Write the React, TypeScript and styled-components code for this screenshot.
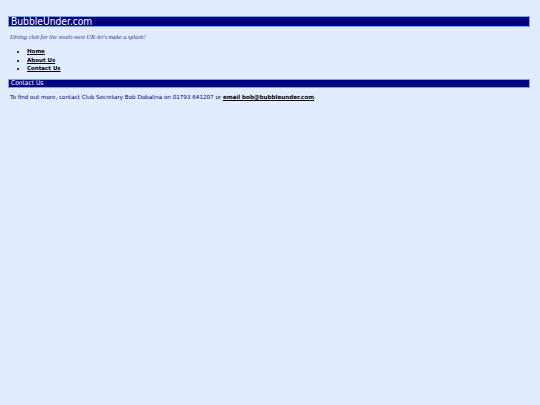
import styled, { createGlobalStyle } from "styled-components";

const GlobalStyle = createGlobalStyle`
  html, body {
    background: #e2ecff;
  }
  body {
    margin: 0;
    padding: 16px 10px 0 8px;
    font-family: "DejaVu Sans", Verdana, sans-serif;
    color: #000080;
  }
`;

const navItems = ["Home", "About Us", "Contact Us"];

export default function App() {
  return (
    <>
      <GlobalStyle />
      <Page>
        <Header>
          <SiteName>BubbleUnder.com</SiteName>
          <Tagline>Diving club for the south-west UK-let's make a splash!</Tagline>
        </Header>
        <Nav>
          <NavList>
            {navItems.map((item) => (
              <NavItem key={item}>
                <NavLink href="#">{item}</NavLink>
              </NavItem>
            ))}
          </NavList>
        </Nav>
        <Section>
          <SectionTitle>Contact Us</SectionTitle>
          <Text>
            To find out more, contact Club Secretary Bob Dobalina on 01793 641207 or{" "}
            <MailLink href="#">email bob@bubbleunder.com</MailLink>.
          </Text>
        </Section>
      </Page>
    </>
  );
}

const Page = styled.div`
  display: flex;
  flex-direction: column;
`;

const Header = styled.div`
  display: flex;
  flex-direction: column;
`;

const SiteName = styled.h1`
  margin: 0;
  padding: 0 2px;
  height: 9px;
  line-height: 9px;
  font-size: 10.2px;
  font-stretch: condensed;
  font-weight: normal;
  color: #ffffff;
  background: #000080;
  border: 1px solid #7da5d8;
`;

const Tagline = styled.p`
  margin: 6px 0 0 2px;
  font-family: "Liberation Serif", Georgia, serif;
  font-style: italic;
  font-size: 6.2px;
  line-height: 8px;
  color: #333399;
`;

const Nav = styled.div`
  margin-top: 6px;
`;

const NavList = styled.ul`
  margin: 0;
  padding-left: 19px;
  font-size: 5.5px;
  line-height: 8.7px;
  color: #000000;
`;

const NavItem = styled.li`
  padding-left: 0;
`;

const NavLink = styled.a`
  color: #000000;
  font-weight: bold;
  text-decoration: underline;
`;

const Section = styled.div`
  margin-top: 6px;
`;

const SectionTitle = styled.h2`
  margin: 0;
  padding: 0 2px;
  height: 7px;
  line-height: 7px;
  font-size: 6.6px;
  font-stretch: condensed;
  font-weight: normal;
  color: #ffffff;
  background: #000080;
  border: 1px solid #7da5d8;
`;

const Text = styled.p`
  margin: 5px 0 0 2px;
  font-size: 5.6px;
  line-height: 8px;
  color: #000080;
`;

const MailLink = styled.a`
  color: #000000;
  font-weight: bold;
  text-decoration: underline;
`;
